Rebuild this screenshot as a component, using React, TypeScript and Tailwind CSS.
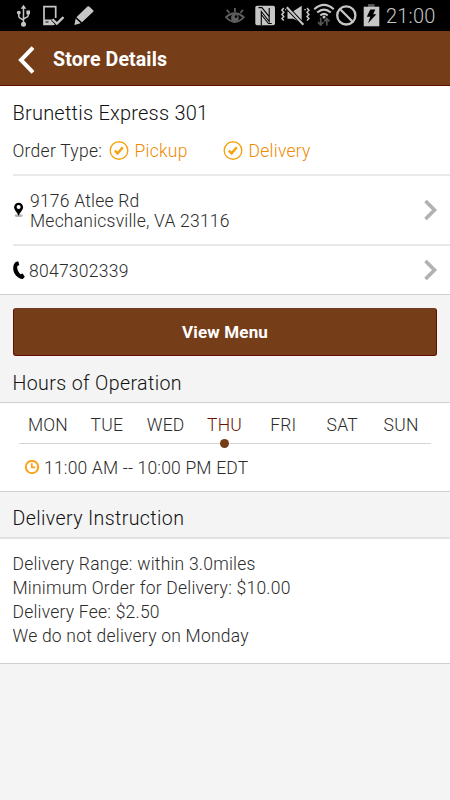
import React, { useState } from "react";

const days = ["MON", "TUE", "WED", "THU", "FRI", "SAT", "SUN"];

const instructions = [
  "Delivery Range: within 3.0miles",
  "Minimum Order for Delivery: $10.00",
  "Delivery Fee: $2.50",
  "We do not delivery on Monday",
];

const StatusBar: React.FC = () => (
  <div className="h-[31px] bg-black flex items-center justify-between pl-4 pr-[13px] text-[#c6c6c6]">
    <div className="flex items-center">
      {/* USB */}
      <svg width="15" height="31" viewBox="0 0 15 31" fill="none" stroke="currentColor" strokeWidth="1.5">
        <path d="M7.5 8v16M2.8 12v4.2q0 1.3 1.3 2l3.4 2M12.2 12v3.2q0 1.3-1.3 2L7.5 19" />
        <path d="M4.7 8.8L7.5 4.8l2.8 4z" fill="currentColor" stroke="none" />
        <circle cx="2.8" cy="12.6" r="1.9" fill="currentColor" stroke="none" />
        <path d="M10.4 10.5H14v3.8h-3.6z" fill="currentColor" stroke="none" />
        <circle cx="7.5" cy="24.2" r="2.5" fill="currentColor" stroke="none" />
      </svg>
      {/* Phone with check */}
      <svg className="ml-3" width="22" height="31" viewBox="0 0 22 31" fill="none" stroke="currentColor">
        <path d="M12.7 18V6.7H1V24.3h9.5" strokeWidth="1.7" />
        <path d="M1 19.5h8l3 5.5H1z" fill="currentColor" stroke="none" />
        <path d="M2.5 22h3" stroke="#000" strokeWidth="1" />
        <path d="M9.5 19.2l4.4 4.4 6.6-6.4" stroke="#000" strokeWidth="3.8" />
        <path d="M9.5 19.2l4.4 4.4 6.6-6.4" strokeWidth="2.3" />
      </svg>
      {/* Pencil */}
      <svg className="ml-[9px]" width="20" height="31" viewBox="0 0 20 31" fill="currentColor">
        <path d="M2.4 17.2L13.5 6.6q.8-.7 1.7 0l4 3.6q.7.8 0 1.6L8 22.3zM1.7 18.5l5 4.7L.4 25z" />
      </svg>
    </div>

    <div className="flex items-center">
      {/* Smart stay eye */}
      <svg width="20" height="31" viewBox="0 0 20 31" fill="none" stroke="#5e5e5e" strokeWidth="1.8">
        <path d="M1 17.2Q9.8 9.4 18.8 17.2Q9.8 26.8 1 17.2z" />
        <circle cx="9.9" cy="17.8" r="3.9" fill="#5e5e5e" stroke="none" />
        <circle cx="11" cy="16.6" r="1.3" fill="#000" stroke="none" />
        <path d="M9.9 12V8M4.4 13L1.8 9.8M15.4 13L18 9.8" />
      </svg>
      {/* NFC */}
      <svg className="ml-[10px]" width="21" height="31" viewBox="0 0 21 31">
        <rect x="0.3" y="5.7" width="19.7" height="19.5" rx="1.8" fill="currentColor" />
        <path
          d="M6.3 25.2V11.5l7.9 10V8M3.5 7.6h3.4l7.3 9M6.3 14.5l7.2 9h3.3"
          fill="none"
          stroke="#000"
          strokeWidth="1.1"
        />
      </svg>
      {/* Vibrate / muted */}
      <svg className="ml-[5px]" width="29" height="31" viewBox="0 0 29 31" fill="none" stroke="currentColor" strokeWidth="1.5">
        <path d="M2.8 8L.9 10.2l1.9 2-1.9 2.2 1.9 2-1.9 2.2 1.9 2M4.8 8.8v1.4M26 8l1.9 2.2-1.9 2 1.9 2.2-1.9 2 1.9 2.2-1.9 2M24 9v1.3" />
        <path d="M6.5 11.2h5.7l8.5-5.4v17.5l-8.5-4.5H6.5z" fill="currentColor" stroke="none" />
        <path d="M5.2 6.6L23 25.4" stroke="#000" strokeWidth="4" />
        <path d="M5.8 7.3L22.4 24.8" strokeWidth="2.1" />
      </svg>
      {/* Wifi */}
      <svg className="ml-[3px]" width="22" height="31" viewBox="0 0 22 31" fill="none" stroke="currentColor" strokeWidth="2.1">
        <path d="M1.3 9.2Q11 .7 20.7 9.2M4.2 12.5Q11 6.6 17.8 12.5M7.3 15.5Q11 12.3 14.7 15.5" />
        <circle cx="11" cy="17" r="1.5" fill="currentColor" stroke="none" />
        <path d="M7.7 17.8v7M5 22.2l2.7 2.9 2.7-2.9M13.8 25.6v-6M11.2 21.5l2.6-2.9 2.7 2.9" stroke="#555" strokeWidth="1.7" />
      </svg>
      {/* Blocked */}
      <svg className="ml-[1px]" width="21" height="31" viewBox="0 0 21 31" fill="none" stroke="currentColor" strokeWidth="2.3">
        <circle cx="10.3" cy="15.4" r="9.1" />
        <path d="M3.9 9l12.8 12.8" />
      </svg>
      {/* Battery */}
      <svg className="ml-[6px]" width="17" height="31" viewBox="0 0 17 31">
        <path d="M5 4h6.6v3H5z" fill="#555" />
        <path d="M.7 6.7h15.6v19.6H.7z" fill="currentColor" />
        <path d="M7.3 9.6h5l-2.1 4.7h3.2L5 23.3l2.3-6.5H3.8z" fill="#000" />
      </svg>
      <span className="ml-[6px] w-[51px] text-[20px] leading-[31px] pt-[1px] tracking-[0.2px] whitespace-nowrap">21:00</span>
    </div>
  </div>
);

const OrderType: React.FC<{ label: string }> = ({ label }) => (
  <div className="flex items-center text-[#ee8a00]">
    <svg width="20" height="20" viewBox="0 0 20 20" fill="none" stroke="#f5a316">
      <circle cx="10" cy="9.5" r="8.8" strokeWidth="1.4" />
      <path d="M5.9 9.7l2.7 2.7 5.2-6.2" strokeWidth="2.5" />
    </svg>
    <span className="ml-[6px] tracking-[0.26px]">{label}</span>
  </div>
);

const RightArrow: React.FC = () => (
  <svg width="14" height="22" viewBox="0 0 14 22" fill="none" stroke="#b1b1b1" strokeWidth="3.6">
    <path d="M1.5 2l9 9-9 9" />
  </svg>
);

const App: React.FC = () => {
  const [activeDay, setActiveDay] = useState("THU");

  return (
    <div className="w-full h-[800px] overflow-hidden bg-[#f4f4f4] font-[Roboto,sans-serif] text-[17.5px] tracking-[0.22px] font-[340] text-[#2b2b2b]">
      <StatusBar />

      {/* Header */}
      <header className="h-[55px] bg-[#763d19] border-b border-[#650e00] flex items-center text-white">
        <button className="ml-[18px]" aria-label="Back">
          <svg className="mt-1" width="17" height="28" viewBox="0 0 17 28" fill="none" stroke="currentColor" strokeWidth="4">
            <path d="M15 1.7L3 14l12 12.3" />
          </svg>
        </button>
        <h1 className="ml-[18px] text-[19.6px] tracking-[0.1px] font-bold leading-none pt-[3px]">Store Details</h1>
      </header>

      {/* Store info */}
      <section className="h-[209px] bg-white border-b border-[#cfcfcf] pl-[12.5px]">
        <div className="h-[90px] border-b-2 border-[#e9e9e9]">
          <h2 className="pt-[15px] text-[20px] leading-6 text-[#111]">Brunettis Express 301</h2>
          <div className="mt-4 flex items-center leading-5">
            <span className="w-[96px] whitespace-nowrap tracking-[0.26px]">Order Type:</span>
            <div className="w-[114px]">
              <OrderType label="Pickup" />
            </div>
            <OrderType label="Delivery" />
          </div>
        </div>
        <div className="h-[70px] border-b-2 border-[#e9e9e9] flex items-center pr-[12px]">
          <svg width="12" height="16" viewBox="0 0 12 16">
            <ellipse cx="5.7" cy="13.6" rx="4" ry="1.5" fill="#b5b5b5" />
            <path d="M5.6.7a4.5 4.5 0 0 1 4.5 4.5c0 3-3 4.7-4.5 8.8C4.1 9.9 1.1 8.2 1.1 5.2A4.5 4.5 0 0 1 5.6.7z" fill="#000" />
            <circle cx="5.6" cy="5" r="2" fill="#fff" />
          </svg>
          <p className="ml-[5.5px] flex-1 pt-[2px] leading-[20.5px]">
            9176 Atlee Rd
            <br />
            Mechanicsville, VA 23116
          </p>
          <RightArrow />
        </div>
        <div className="h-[48px] flex items-center pr-[12px]">
          <svg width="12" height="19" viewBox="0 0 12 19">
            <path d="M2.8.9L5.2.2l1.1 3.7-2.1 1.3c-.3 3 1 5.8 3.3 8l2.1-.7 2.2 3.2-2 2.2C5.500 18.200.2 13.200.2 7.500.2 4.200 1.200 2 2.800.9z" fill="#000" />
          </svg>
          <p className="ml-[4.5px] flex-1 pt-[2px] tracking-[0.26px]">8047302339</p>
          <RightArrow />
        </div>
      </section>

      <div className="px-[13px] pt-[13px]">
        <button className="w-full h-[48px] rounded-[3px] bg-[#763d19] border border-[#650e00] border-t-[#6b3a20] text-white text-[17px] tracking-[0.15px] font-bold pt-[2px]">
          View Menu
        </button>
      </div>

      {/* Hours */}
      <h3 className="h-[46px] pl-[12.5px] pt-[16px] text-[19.6px] tracking-[0.38px] leading-6 text-[#111]">
        Hours of Operation
      </h3>
      <section className="h-[90px] bg-white border-y border-[#cfcfcf] px-[19px]">
        <div className="h-[41px] border-b border-[#d6d6d6] flex">
          {days.map((day) => (
            <button
              key={day}
              onClick={() => setActiveDay(day)}
              className={`relative flex-1 pt-[4px] pr-px ${activeDay === day ? "text-[#6b1200]" : ""}`}
            >
              {day}
              {activeDay === day && (
                <span className="absolute left-1/2 -ml-[5px] -bottom-[5px] w-[9px] h-[9px] rounded-full bg-[#763d19]" />
              )}
            </button>
          ))}
        </div>
        <div className="pl-[5px] pt-[13px] flex items-center leading-5">
          <svg width="16" height="16" viewBox="0 0 16 16" fill="none" stroke="#f9a31a" strokeWidth="2">
            <circle cx="8" cy="7" r="6.2" />
            <path d="M7.8 3.3v4h3.5" strokeWidth="1.7" />
          </svg>
          <span className="ml-[4px] pt-[1px] tracking-[0.18px]">11:00 AM -- 10:00 PM EDT</span>
        </div>
      </section>

      {/* Delivery */}
      <h3 className="h-[45px] pl-[12.5px] pt-[15px] text-[19.6px] tracking-[0.38px] leading-6 text-[#111]">
        Delivery Instruction
      </h3>
      <section className="h-[127px] bg-white border-t-2 border-t-[#e2e2e2] border-b border-b-[#cfcfcf] pl-[12.5px] pt-[13px]">
        {instructions.map((line) => (
          <p key={line} className="leading-6">
            {line}
          </p>
        ))}
      </section>
    </div>
  );
};

export default App;
